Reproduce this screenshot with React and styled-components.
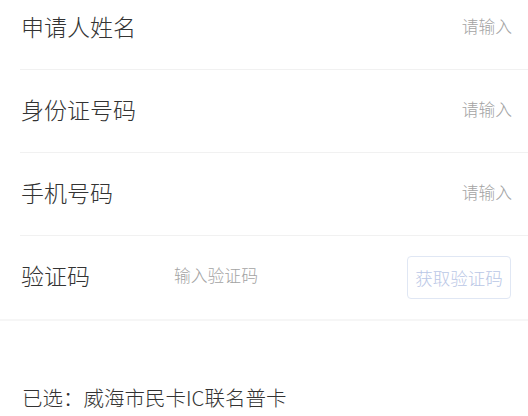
import React from "react";
import styled, { createGlobalStyle } from "styled-components";

const GlobalStyle = createGlobalStyle`
  html, body {
    margin: 0;
    padding: 0;
    background: #ffffff;
    overflow: hidden;
  }
  body {
    font-family: "Noto Sans CJK SC", "Noto Sans", sans-serif;
  }
`;

const fields = [
  { label: "申请人姓名", placeholder: "请输入" },
  { label: "身份证号码", placeholder: "请输入" },
  { label: "手机号码", placeholder: "请输入" },
];

const App = () => {
  return (
    <>
      <GlobalStyle />
      <Page>
        <Form>
          {fields.map((field) => (
            <Row key={field.label}>
              <Label>{field.label}</Label>
              <Input align="right" placeholder={field.placeholder} />
            </Row>
          ))}
          <Row last>
            <Label width="153px">验证码</Label>
            <Input placeholder="输入验证码" />
            <CodeButton type="button">获取验证码</CodeButton>
          </Row>
        </Form>
        <Selected>已选：威海市民卡IC联名普卡</Selected>
      </Page>
    </>
  );
};

const Page = styled.div`
  display: flex;
  flex-direction: column;
  width: 528px;
  margin-top: -13px;
`;

const Form = styled.div`
  display: flex;
  flex-direction: column;
  border-bottom: 2px solid #f6f6f6;
`;

const Row = styled.div`
  display: flex;
  align-items: center;
  box-sizing: border-box;
  height: 83px;
  margin-left: 20px;
  padding: 0 16px 4px 1px;
  border-bottom: 1px solid ${(p) => (p.last ? "transparent" : "#f1f1f1")};
`;

const Label = styled.span`
  flex: 0 0 ${(p) => p.width || "auto"};
  font-size: 23px;
  font-weight: 300;
  color: #333333;
  white-space: nowrap;
`;

const Input = styled.input`
  flex: 1;
  min-width: 0;
  border: none;
  outline: none;
  background: transparent;
  padding: 0;
  font-family: inherit;
  font-size: 16.8px;
  font-weight: 300;
  color: #333333;
  text-align: ${(p) => p.align || "left"};
  &::placeholder {
    color: #a3a3a3;
  }
`;

const CodeButton = styled.button`
  flex: 0 0 auto;
  width: 104px;
  height: 43px;
  margin: 4px 1px 0 0;
  padding: 0;
  border: 1px solid #e0e7f4;
  border-radius: 4px;
  background: #ffffff;
  font-family: inherit;
  font-size: 17.5px;
  font-weight: 300;
  color: #bac7e6;
`;

const Selected = styled.div`
  margin: 62px 0 0 22px;
  font-size: 20.5px;
  font-weight: 300;
  line-height: 28px;
  color: #333333;
`;

export default App;
